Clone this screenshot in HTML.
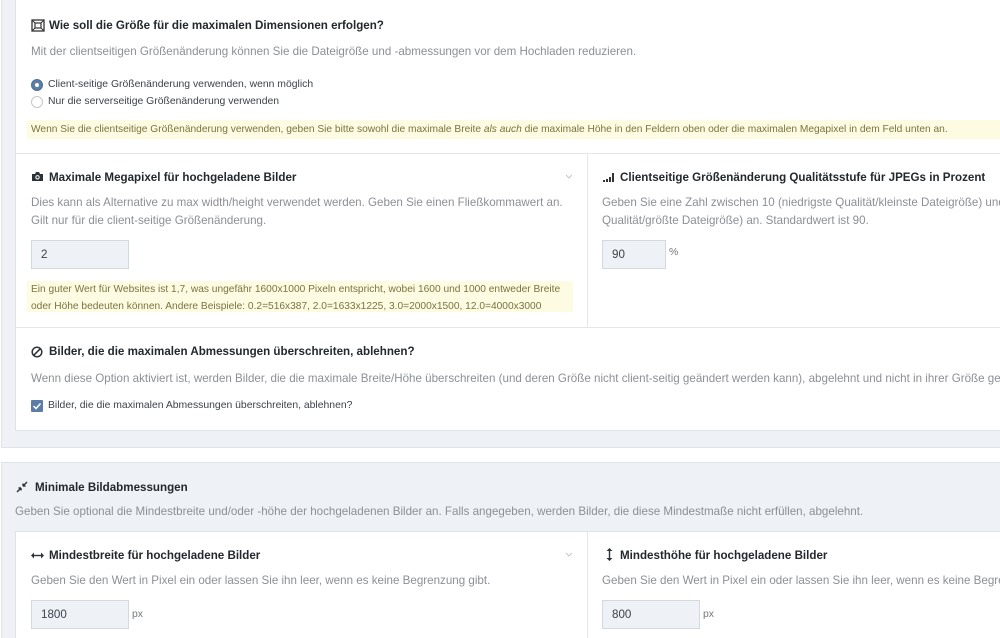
<!DOCTYPE html>
<html><head><meta charset="utf-8"><style>
*{box-sizing:border-box;margin:0;padding:0}
html,body{width:1000px;height:638px;overflow:hidden}
body{background:#fff;font-family:"Liberation Sans",sans-serif;position:relative}
.abs{position:absolute}
.panel{position:absolute;left:1px;width:1100px;background:#eef1f5;border:1px solid #dfe3e8}
.card{position:absolute;left:15px;width:1100px;background:#fff;border:1px solid #dfe3e8}
.h{position:absolute;font-weight:bold;font-size:11.6px;color:#23282d;white-space:nowrap}
.d{position:absolute;font-size:11.6px;color:#8c8f94;white-space:nowrap;line-height:18px}
.s{position:absolute;font-size:10.4px;color:#3c434a;white-space:nowrap}
.note{position:absolute;background:#fdfbe1;font-size:10.2px;color:#7a7440;line-height:17px;padding:1px 4px;white-space:nowrap}
.inp{position:absolute;background:#eef1f5;border:1px solid #d3d9e0;height:29px;font-size:11.6px;color:#3c434a;padding:7px 0 0 9px}
.hl{position:absolute;height:1px;background:#e3e7eb}
.vl{position:absolute;width:1px;background:#e3e7eb}
</style></head><body>
<div class="panel" style="top:-5px;height:453px"></div>
<div class="card" style="top:-2px;height:433px"></div>
<!-- row 1 -->
<svg class="abs" style="left:31px;top:19px" width="14" height="13" viewBox="0 0 14 13"><rect x="1" y="1" width="12" height="11" fill="none" stroke="#333" stroke-width="1.3"/><rect x="4" y="4" width="6" height="5" fill="none" stroke="#333" stroke-width="1.2"/><path d="M1 1l3 3M13 1l-3 3M1 12l3-3M13 12l-3-3" stroke="#333" stroke-width="1"/></svg>
<div class="h" style="left:49px;top:19px">Wie soll die Größe für die maximalen Dimensionen erfolgen?</div>
<div class="d" style="left:31px;top:43px">Mit der clientseitigen Größenänderung können Sie die Dateigröße und -abmessungen vor dem Hochladen reduzieren.</div>
<div class="abs" style="left:31px;top:79px;width:12px;height:12px;border-radius:50%;background:#5b7ea6;border:1px solid #4f6f94"><div style="position:absolute;left:3px;top:3px;width:4px;height:4px;border-radius:50%;background:#fff"></div></div>
<div class="s" style="left:48px;top:79px">Client-seitige Größenänderung verwenden, wenn möglich</div>
<div class="abs" style="left:31px;top:96px;width:12px;height:12px;border-radius:50%;background:#fff;border:1px solid #c3c7cc"></div>
<div class="s" style="left:48px;top:96px">Nur die serverseitige Größenänderung verwenden</div>
<div class="note" style="left:27px;top:120px;width:980px">Wenn Sie die clientseitige Größenänderung verwenden, geben Sie bitte sowohl die maximale Breite <i>als auch</i> die maximale Höhe in den Feldern oben oder die maximalen Megapixel in dem Feld unten an.</div>
<div class="hl" style="left:16px;top:153px;width:990px"></div>
<!-- row 2 -->
<div class="vl" style="left:587px;top:153px;height:174px"></div>
<svg class="abs" style="left:31px;top:171px" width="13" height="11" viewBox="0 0 13 11"><path d="M1 3h3l1-2h3l1 2h3v7H1z" fill="#2c3338"/><circle cx="6.5" cy="6.3" r="2.2" fill="#fff"/><circle cx="6.5" cy="6.3" r="1.2" fill="#2c3338"/></svg>
<div class="h" style="left:49px;top:171px">Maximale Megapixel für hochgeladene Bilder</div>
<svg class="abs" style="left:565px;top:174px" width="8" height="5" viewBox="0 0 8 5"><path d="M1 1l3 3 3-3" fill="none" stroke="#c4c8cc"/></svg>
<div class="d" style="left:31px;top:194px">Dies kann als Alternative zu max width/height verwendet werden. Geben Sie einen Fließkommawert an.</div>
<div class="d" style="left:31px;top:212px">Gilt nur für die client-seitige Größenänderung.</div>
<div class="inp" style="left:31px;top:240px;width:98px">2</div>
<div class="note" style="left:27px;top:281px;width:546px;height:31px;padding-top:0">Ein guter Wert für Websites ist 1,7, was ungefähr 1600x1000 Pixeln entspricht, wobei 1600 und 1000 entweder Breite<br>oder Höhe bedeuten können. Andere Beispiele: 0.2=516x387, 2.0=1633x1225, 3.0=2000x1500, 12.0=4000x3000</div>
<svg class="abs" style="left:603px;top:173px" width="13" height="9" viewBox="0 0 13 9"><rect x="0" y="7" width="2" height="2" fill="#333"/><rect x="3" y="6" width="2" height="3" fill="#333"/><rect x="6" y="4" width="2" height="5" fill="#333"/><rect x="9" y="0" width="2" height="9" fill="#333"/></svg>
<div class="h" style="left:620px;top:171px">Clientseitige Größenänderung Qualitätsstufe für JPEGs in Prozent</div>
<div class="d" style="left:602px;top:194px">Geben Sie eine Zahl zwischen 10 (niedrigste Qualität/kleinste Dateigröße) und 100 (höchste</div>
<div class="d" style="left:602px;top:212px">Qualität/größte Dateigröße) an. Standardwert ist 90.</div>
<div class="inp" style="left:602px;top:240px;width:64px">90</div>
<div class="s" style="left:669px;top:247px;color:#777">%</div>
<div class="hl" style="left:16px;top:327px;width:990px"></div>
<!-- row 3 -->
<svg class="abs" style="left:31px;top:346px" width="12" height="12" viewBox="0 0 12 12"><circle cx="6" cy="6" r="4.8" fill="none" stroke="#2c3338" stroke-width="1.5"/><path d="M2.8 9.2L9.2 2.8" stroke="#2c3338" stroke-width="1.5"/></svg>
<div class="h" style="left:49px;top:345px">Bilder, die die maximalen Abmessungen überschreiten, ablehnen?</div>
<div class="d" style="left:31px;top:370px">Wenn diese Option aktiviert ist, werden Bilder, die die maximale Breite/Höhe überschreiten (und deren Größe nicht client-seitig geändert werden kann), abgelehnt und nicht in ihrer Größe geändert.</div>
<div class="abs" style="left:31px;top:400px;width:12px;height:12px;background:#5b7ea6;border-radius:1px"><svg width="12" height="12" viewBox="0 0 12 12" style="position:absolute;left:0;top:0"><path d="M2.5 6l2.5 2.5 4.5-5" fill="none" stroke="#fff" stroke-width="1.5"/></svg></div>
<div class="s" style="left:48px;top:400px">Bilder, die die maximalen Abmessungen überschreiten, ablehnen?</div>
<!-- panel 2 -->
<div class="panel" style="top:462px;height:200px"></div>
<svg class="abs" style="left:16px;top:481px" width="12" height="12" viewBox="0 0 12 12"><path d="M1 11l4-4M5 7H2.5M5 7v2.5M11 1L7 5M7 5h2.5M7 5V2.5" stroke="#2c3338" stroke-width="1.4" fill="none"/></svg>
<div class="h" style="left:35px;top:481px">Minimale Bildabmessungen</div>
<div class="d" style="left:15px;top:503px">Geben Sie optional die Mindestbreite und/oder -höhe der hochgeladenen Bilder an. Falls angegeben, werden Bilder, die diese Mindestmaße nicht erfüllen, abgelehnt.</div>
<div class="card" style="top:531px;height:120px"></div>
<div class="vl" style="left:587px;top:532px;height:110px"></div>
<svg class="abs" style="left:31px;top:552px" width="13" height="7" viewBox="0 0 13 7"><path d="M1 3.5h11" stroke="#2c3338" stroke-width="1.4"/><path d="M0 3.5l3-3v6zM13 3.5l-3-3v6z" fill="#2c3338"/></svg>
<div class="h" style="left:49px;top:549px">Mindestbreite für hochgeladene Bilder</div>
<svg class="abs" style="left:565px;top:552px" width="8" height="5" viewBox="0 0 8 5"><path d="M1 1l3 3 3-3" fill="none" stroke="#c4c8cc"/></svg>
<div class="d" style="left:31px;top:572px">Geben Sie den Wert in Pixel ein oder lassen Sie ihn leer, wenn es keine Begrenzung gibt.</div>
<div class="inp" style="left:31px;top:600px;width:98px">1800</div>
<div class="s" style="left:132px;top:609px;color:#777">px</div>
<svg class="abs" style="left:606px;top:548px" width="7" height="13" viewBox="0 0 7 13"><path d="M3.5 1v11" stroke="#2c3338" stroke-width="1.4"/><path d="M3.5 0l-3 3h6zM3.5 13l-3-3h6z" fill="#2c3338"/></svg>
<div class="h" style="left:620px;top:549px">Mindesthöhe für hochgeladene Bilder</div>
<div class="d" style="left:602px;top:572px">Geben Sie den Wert in Pixel ein oder lassen Sie ihn leer, wenn es keine Begrenzung gibt.</div>
<div class="inp" style="left:602px;top:600px;width:98px">800</div>
<div class="s" style="left:703px;top:609px;color:#777">px</div>
</body></html>
